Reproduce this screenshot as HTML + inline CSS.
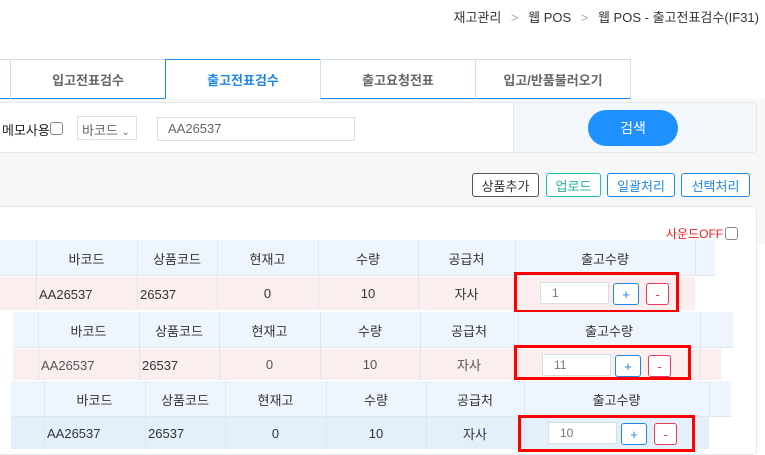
<!DOCTYPE html><html><head><meta charset="utf-8"><style>
*{margin:0;padding:0;box-sizing:border-box}
body{width:765px;height:455px;overflow:hidden;background:#fff;font-family:"Liberation Sans","Noto Sans CJK KR",sans-serif;font-size:13px;color:#333;position:relative}
.a{position:absolute;white-space:nowrap}
.c{position:absolute;display:flex;align-items:center;justify-content:center;font-size:13px}
.tab{position:absolute;top:59px;height:40px;border:1px solid #d5dde6;border-bottom:1px solid #1e88e5;display:flex;align-items:center;justify-content:center;color:#666;font-size:13px;font-weight:bold;background:#fff}
.btn{position:absolute;top:173px;height:24px;border:1px solid #555;border-radius:3px;display:flex;align-items:center;justify-content:center;font-size:13px;background:#fff}
.inp{position:absolute;height:22px;border:1px solid #d8dee6;background:#fff;color:#777;padding-left:11px;line-height:20px;font-size:12px}
.pl,.mi{position:absolute;width:26px;height:22px;border:1px solid #1e88e5;border-radius:3px;color:#1e88e5;display:flex;align-items:center;justify-content:center;background:#fff}
.mi{border-color:#e83a5a;color:#e83a5a;width:23px}
.red{position:absolute;border:3px solid #f00}
.vl{position:absolute;width:1px;background:#dfe6ee}
</style></head><body>
<div class="a" style="right:6px;top:7px;font-size:13px;color:#333">재고관리 <span style="color:#aaa;margin:0 6px">&gt;</span> 웹 POS <span style="color:#aaa;margin:0 6px">&gt;</span> 웹 POS - 출고전표검수(IF31)</div>

<div class="tab" style="left:-2px;width:13px"></div>
<div class="tab" style="left:10px;width:156px">입고전표검수</div>
<div class="tab" style="left:165px;width:156px;border-color:#1e88e5;border-bottom:1px solid #fff;color:#1e88e5">출고전표검수</div>
<div class="tab" style="left:320px;width:156px">출고요청전표</div>
<div class="tab" style="left:475px;width:156px">입고/반품불러오기</div>

<div class="a" style="left:0;top:99px;width:765px;height:145px;background:#f7f7f7"></div>
<div class="a" style="left:-5px;top:102px;width:762px;height:51px;background:#fff;border:1px solid #e3e8ee;border-radius:4px"></div>
<div class="a" style="left:513px;top:103px;width:243px;height:49px;background:#f3f7fb;border-left:1px solid #e3e8ee"></div>
<div class="c" style="left:588px;top:110px;width:90px;height:36px;background:#1e90ff;border-radius:18px;color:#fff;font-size:14px">검색</div>
<div class="a" style="left:2px;top:120px;font-size:13px;color:#222">메모사용</div>
<div class="a" style="left:50px;top:122px;width:13px;height:13px;border:1px solid #888;border-radius:3px;background:#fff"></div>
<div class="a" style="left:77px;top:116px;width:60px;height:24px;border:1px solid #dde2e8;color:#666;padding:3px 4px;font-size:13px;background:#fff">바코드 <span style="font-size:10px">&#8964;</span></div>
<div class="inp" style="left:157px;top:117px;width:198px;height:24px;font-size:13px;color:#666;padding-left:10px;line-height:22px">AA26537</div>

<div class="btn" style="left:472px;width:67px">상품추가</div>
<div class="btn" style="left:546px;width:55px;border-color:#20c0b0;color:#20b0a0">업로드</div>
<div class="btn" style="left:607px;width:68px;border-color:#1e88e5;color:#1e88e5">일괄처리</div>
<div class="btn" style="left:681px;width:69px;border-color:#1e88e5;color:#1e88e5">선택처리</div>

<div class="a" style="left:-5px;top:206px;width:762px;height:249px;background:#fff;border:1px solid #e3e8ee;border-radius:5px"></div>
<div class="a" style="left:666px;top:225px;color:#f02020;font-size:12px">사운드OFF</div>
<div class="a" style="left:725px;top:227px;width:13px;height:13px;border:1px solid #888;border-radius:3px;background:#fff"></div>

<!-- table 1 -->
<div class="a" style="left:0;top:240px;width:715px;height:36px;background:#eef5fe;border-bottom:1px solid #dfe6ee"></div>
<div class="a" style="left:0;top:277px;width:695px;height:33px;background:#fbeeee"></div>
<div class="vl" style="left:36px;top:240px;height:70px"></div><div class="vl" style="left:137px;top:240px;height:70px"></div><div class="vl" style="left:217px;top:240px;height:70px"></div><div class="vl" style="left:318px;top:240px;height:70px"></div><div class="vl" style="left:418px;top:240px;height:70px"></div><div class="vl" style="left:515px;top:240px;height:70px"></div><div class="vl" style="left:695px;top:240px;height:36px"></div>
<div class="c" style="left:36px;top:240px;width:101px;height:36px">바코드</div><div class="c" style="left:137px;top:240px;width:80px;height:36px">상품코드</div><div class="c" style="left:217px;top:240px;width:101px;height:36px">현재고</div><div class="c" style="left:318px;top:240px;width:100px;height:36px">수량</div><div class="c" style="left:418px;top:240px;width:97px;height:36px">공급처</div><div class="c" style="left:515px;top:240px;width:180px;height:36px">출고수량</div>
<div class="a" style="left:39px;top:287px">AA26537</div><div class="a" style="left:140px;top:287px">26537</div><div class="c" style="left:217px;top:277px;width:101px;height:33px">0</div><div class="c" style="left:318px;top:277px;width:100px;height:33px">10</div><div class="c" style="left:418px;top:277px;width:97px;height:33px">자사</div>
<div class="red" style="left:514px;top:272px;width:165px;height:41px"></div>
<div class="inp" style="left:540px;top:282px;width:69px">1</div><div class="pl" style="left:613px;top:283px">+</div><div class="mi" style="left:646px;top:283px">-</div>

<!-- table 2 -->
<div class="a" style="left:13px;top:312px;width:720px;height:36px;background:#eef5fe;border-bottom:1px solid #dfe6ee"></div>
<div class="a" style="left:13px;top:349px;width:708px;height:31px;background:#fbeeee"></div>
<div class="vl" style="left:38px;top:312px;height:68px"></div><div class="vl" style="left:139px;top:312px;height:68px"></div><div class="vl" style="left:219px;top:312px;height:68px"></div><div class="vl" style="left:320px;top:312px;height:68px"></div><div class="vl" style="left:420px;top:312px;height:68px"></div><div class="vl" style="left:518px;top:312px;height:68px"></div><div class="vl" style="left:700px;top:312px;height:68px"></div>
<div class="c" style="left:38px;top:312px;width:101px;height:36px">바코드</div><div class="c" style="left:139px;top:312px;width:80px;height:36px">상품코드</div><div class="c" style="left:219px;top:312px;width:101px;height:36px">현재고</div><div class="c" style="left:320px;top:312px;width:100px;height:36px">수량</div><div class="c" style="left:420px;top:312px;width:98px;height:36px">공급처</div><div class="c" style="left:518px;top:312px;width:182px;height:36px">출고수량</div>
<div class="a" style="left:41px;top:358px;color:#555">AA26537</div><div class="a" style="left:142px;top:358px">26537</div><div class="c" style="left:219px;top:349px;width:101px;height:31px;color:#555">0</div><div class="c" style="left:320px;top:349px;width:100px;height:31px;color:#555">10</div><div class="c" style="left:420px;top:349px;width:98px;height:31px;color:#555">자사</div>
<div class="red" style="left:514px;top:345px;width:177px;height:35px"></div>
<div class="inp" style="left:542px;top:354px;width:69px">11</div><div class="pl" style="left:615px;top:355px">+</div><div class="mi" style="left:648px;top:355px">-</div>

<!-- table 3 -->
<div class="a" style="left:11px;top:381px;width:720px;height:36px;background:#eef5fe;border-bottom:1px solid #dfe6ee"></div>
<div class="a" style="left:11px;top:417px;width:698px;height:32px;background:#e3effa"></div>
<div class="vl" style="left:44px;top:381px;height:68px"></div><div class="vl" style="left:145px;top:381px;height:68px"></div><div class="vl" style="left:225px;top:381px;height:68px"></div><div class="vl" style="left:326px;top:381px;height:68px"></div><div class="vl" style="left:426px;top:381px;height:68px"></div><div class="vl" style="left:524px;top:381px;height:68px"></div><div class="vl" style="left:709px;top:381px;height:36px"></div>
<div class="c" style="left:44px;top:381px;width:101px;height:36px">바코드</div><div class="c" style="left:145px;top:381px;width:80px;height:36px">상품코드</div><div class="c" style="left:225px;top:381px;width:101px;height:36px">현재고</div><div class="c" style="left:326px;top:381px;width:100px;height:36px">수량</div><div class="c" style="left:426px;top:381px;width:98px;height:36px">공급처</div><div class="c" style="left:524px;top:381px;width:185px;height:36px">출고수량</div>
<div class="a" style="left:47px;top:426px">AA26537</div><div class="a" style="left:148px;top:426px">26537</div><div class="c" style="left:225px;top:417px;width:101px;height:32px">0</div><div class="c" style="left:326px;top:417px;width:100px;height:32px">10</div><div class="c" style="left:426px;top:417px;width:98px;height:32px">자사</div>
<div class="red" style="left:518px;top:415px;width:177px;height:37px"></div>
<div class="inp" style="left:548px;top:422px;width:69px">10</div><div class="pl" style="left:621px;top:423px">+</div><div class="mi" style="left:654px;top:423px">-</div>
</body></html>
